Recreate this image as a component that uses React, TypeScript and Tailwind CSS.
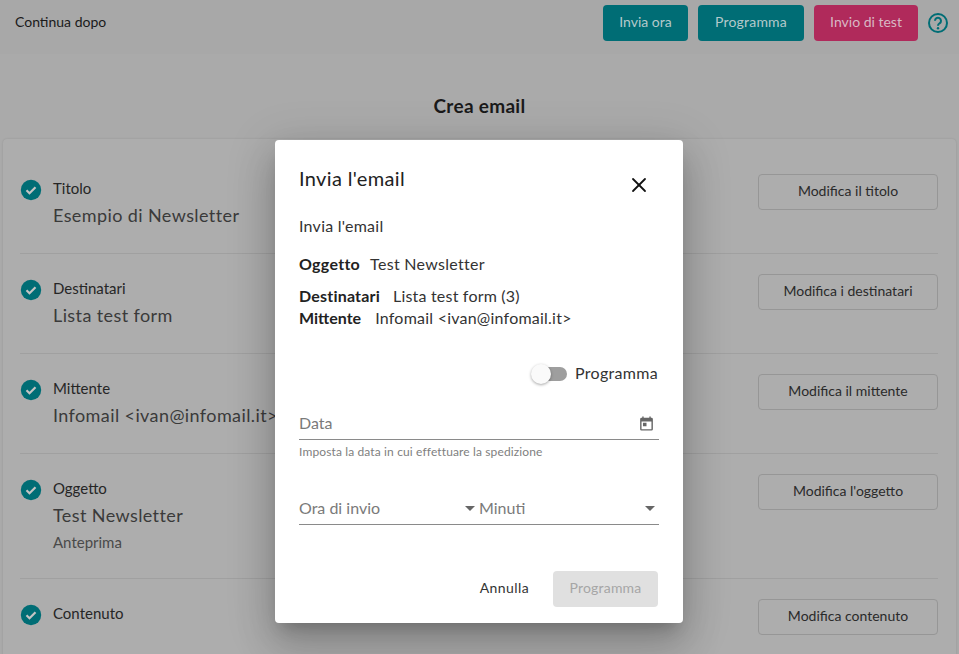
import { X } from "lucide-react"

const font = "font-['Lato','Noto_Sans',sans-serif]"

const rows = [
  { label: "Titolo", value: "Esempio di Newsletter", action: "Modifica il titolo", h: "h-[115px]" },
  { label: "Destinatari", value: "Lista test form", action: "Modifica i destinatari", h: "h-[100px]" },
  { label: "Mittente", value: "Infomail <ivan@infomail.it>", action: "Modifica il mittente", h: "h-[100px]" },
  { label: "Oggetto", value: "Test Newsletter", sub: "Anteprima", action: "Modifica l'oggetto", h: "h-[125px]" },
  { label: "Contenuto", action: "Modifica contenuto", h: "h-[80px]" },
]

function CheckIcon() {
  return (
    <svg width="22" height="22" viewBox="0 0 22 22" className="shrink-0">
      <circle cx="11" cy="11" r="10.2" fill="#006d75" />
      <path d="M6.5 11.2l3 3 6-6" fill="none" stroke="#c4c4c4" strokeWidth="2.2" />
    </svg>
  )
}

export default function App() {
  return (
    <div className={`${font} relative h-[654px] w-[959px] overflow-hidden bg-[#aaaaaa] text-[#1a1a1a]`}>
      <header className="flex h-[54px] items-center bg-[#a8a8a8] pb-[8px] pl-[15px] pr-[10px]">
        <span className="pb-[4px] text-[14px]">Continua dopo</span>
        <div className="ml-auto flex items-center">
          <button className="flex h-[36px] w-[85px] items-center justify-center rounded bg-[#006d75] pb-[4px] text-[14px] text-[#b4c9cb]">Invia ora</button>
          <button className="ml-[10px] flex h-[36px] w-[106px] items-center justify-center rounded bg-[#006d75] pb-[4px] text-[14px] tracking-[0.2px] text-[#b4c9cb]">Programma</button>
          <button className="ml-[10px] flex h-[36px] w-[104px] items-center justify-center rounded bg-[#b02a5b] pb-[4px] text-[14px] text-[#d8b8c4]">Invio di test</button>
          <svg width="22" height="22" viewBox="0 0 22 22" className="ml-[9px]">
            <circle cx="11" cy="11" r="9" fill="none" stroke="#006d75" strokeWidth="2" />
            <path d="M8 8.8a3 3 0 1 1 4.6 2.5c-1 .7-1.6 1.2-1.6 2.4" fill="none" stroke="#006d75" strokeWidth="2" />
            <circle cx="11" cy="16.2" r="1.2" fill="#006d75" />
          </svg>
        </div>
      </header>

      <h1 className="flex h-[85px] items-center justify-center pt-[20px] text-[19px] font-bold tracking-[0.3px]">Crea email</h1>

      <section className="ml-[3px] w-[953px] rounded-t-sm bg-[#adadad] pl-[17px] pr-[18px] shadow-[0_0_2px_rgba(0,0,0,0.15)]">
        {rows.map((r, i) => (
          <div key={r.label} className={`flex ${r.h} ${i < 4 ? "border-b border-[#a0a0a0]" : ""} ${i === 0 ? "pt-[39px]" : "pt-[24px]"}`}>
            <div className="mt-[1px]"><CheckIcon /></div>
            <div className="ml-[11px] flex-1">
              <div className="text-[15px] leading-[20px] text-[#262626]">{r.label}</div>
              {r.value && <div className="mt-[5px] text-[18px] leading-[24px] tracking-[0.4px] text-[#3a3a3a]">{r.value}</div>}
              {r.sub && <div className="mt-[5px] text-[15px] leading-[20px] text-[#4a4a4a]">{r.sub}</div>}
            </div>
            <button className="-mt-[4px] h-[36px] w-[180px] rounded-sm border border-[#969696] pb-[4px] text-[14px] text-[#2a2a2a]">{r.action}</button>
          </div>
        ))}
      </section>

      <div className="absolute left-[275px] top-[140px] h-[483px] w-[408px] rounded bg-white px-[24px] shadow-[0_11px_15px_-7px_rgba(0,0,0,0.2),0_24px_38px_3px_rgba(0,0,0,0.14),0_9px_46px_8px_rgba(0,0,0,0.12)]">
        <div className="flex items-start justify-between pt-[25px]">
          <h2 className="text-[20px] leading-[26px] tracking-[0.35px] text-[#222]">Invia l'email</h2>
          <X size={24} strokeWidth={1.8} className="mr-[8px] mt-[8px] text-[#111]" />
        </div>
        <p className="mt-[19px] text-[16px] leading-[20px] tracking-[0.25px] text-[#333]">Invia l'email</p>
        <p className="mt-[18px] text-[16px] leading-[20px] tracking-[0.3px] text-[#333]"><b className="font-bold text-[#222]">Oggetto</b><span className="ml-[10px]">Test Newsletter</span></p>
        <p className="mt-[11px] text-[16px] leading-[22px] tracking-[0.2px] text-[#333]"><b className="font-bold text-[#222]">Destinatari</b><span className="ml-[13px]">Lista test form (3)</span></p>
        <p className="text-[16px] leading-[22px] text-[#333]"><b className="font-bold text-[#222]">Mittente</b><span className="ml-[14px] tracking-[0.23px]">Infomail &lt;ivan@infomail.it&gt;</span></p>

        <div className="mt-[32px] flex items-center justify-end pr-[1px]">
          <div className="relative h-[14px] w-[35px] rounded-full bg-[#9e9e9e]">
            <div className="absolute left-[-1px] top-[-3px] h-[20px] w-[20px] rounded-full bg-[#fafafa] shadow-[0_1px_3px_rgba(0,0,0,0.35)]" />
          </div>
          <span className="ml-[8px] pb-[2px] text-[16px] tracking-[0.3px] text-[#333]">Programma</span>
        </div>

        <div className="mt-[22px] flex h-[31px] items-center justify-between border-b border-[#8a8a8a] pb-[2px]">
          <span className="text-[16px] text-[#7a7a7a]">Data</span>
          <svg width="17" height="17" viewBox="0 0 24 24" className="mr-[4px] fill-[#666]">
            <path d="M19 4h-1V2h-2v2H8V2H6v2H5a2 2 0 0 0-2 2v14a2 2 0 0 0 2 2h14a2 2 0 0 0 2-2V6a2 2 0 0 0-2-2zm0 16H5V9h14v11zM7 11h5v5H7z" />
          </svg>
        </div>
        <p className="mt-[4px] text-[12px] leading-[16px] tracking-[0.13px] text-[#808080]">Imposta la data in cui effettuare la spedizione</p>

        <div className="mt-[32px] flex h-[33px] items-center border-b border-[#8a8a8a]">
          <div className="flex w-[180px] items-center justify-between pr-[4px]">
            <span className="text-[16px] text-[#7a7a7a]">Ora di invio</span>
            <span className="h-0 w-0 border-x-[5px] border-t-[5px] border-x-transparent border-t-[#666]" />
          </div>
          <div className="flex flex-1 items-center justify-between pr-[4px]">
            <span className="text-[16px] text-[#7a7a7a]">Minuti</span>
            <span className="h-0 w-0 border-x-[5px] border-t-[5px] border-x-transparent border-t-[#666]" />
          </div>
        </div>

        <div className="mt-[46px] flex items-center justify-end">
          <button className="pb-[4px] text-[14px] tracking-[0.4px] text-[#333]">Annulla</button>
          <button className="ml-[24px] mr-[1px] h-[36px] w-[105px] rounded bg-[#e0e0e0] pb-[4px] text-[14px] tracking-[0.2px] text-[#a6a6a6]">Programma</button>
        </div>
      </div>
    </div>
  )
}
